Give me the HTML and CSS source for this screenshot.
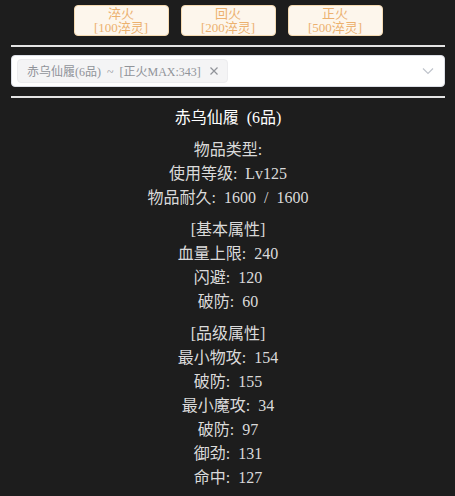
FILE: index.html
```html
<!DOCTYPE html>
<html lang="zh">
<head>
<meta charset="utf-8">
<title>赤乌仙履</title>
<link rel="stylesheet" href="styles.css">
</head>
<body>
<div class="page">
  <div class="btns">
    <button class="btn"><span>淬火</span><span>[100淬灵]</span></button>
    <button class="btn"><span>回火</span><span>[200淬灵]</span></button>
    <button class="btn"><span>正火</span><span>[500淬灵]</span></button>
  </div>
  <hr class="rule">
  <div class="select">
    <span class="tag">赤乌仙履(6品) ~ [正火MAX:343]<svg class="tag-close" viewBox="0 0 14 14" width="14" height="14"><path d="M3.5 3.5 L10.5 10.5 M10.5 3.5 L3.5 10.5" stroke="#909399" stroke-width="1.2" fill="none"/></svg></span>
    <svg class="arrow" viewBox="0 0 12 8" width="12" height="8"><path d="M1 1.5 L6 6.5 L11 1.5" stroke="#c0c4cc" stroke-width="1.2" fill="none"/></svg>
  </div>
  <hr class="rule">
  <div class="info">
    <div class="title">赤乌仙履 (6品)</div>
    <div class="group">
      <div>物品类型:</div>
      <div>使用等级: Lv125</div>
      <div>物品耐久: 1600 / 1600</div>
    </div>
    <div class="group">
      <div>[基本属性]</div>
      <div>血量上限: 240</div>
      <div>闪避: 120</div>
      <div>破防: 60</div>
    </div>
    <div class="group">
      <div>[品级属性]</div>
      <div>最小物攻: 154</div>
      <div>破防: 155</div>
      <div>最小魔攻: 34</div>
      <div>破防: 97</div>
      <div>御劲: 131</div>
      <div>命中: 127</div>
    </div>
  </div>
</div>
</body>
</html>
```

FILE: styles.css
```css
html, body {
  margin: 0;
  padding: 0;
  background: #1d1d1d;
  font-family: "Liberation Serif", "Noto Sans CJK SC", serif;
}

.page {
  padding: 5px 10px 0 11px;
}

.btns {
  display: flex;
  justify-content: center;
  gap: 12px;
}

.btn {
  width: 95px;
  height: 31px;
  box-sizing: border-box;
  border: 1px solid #f5dab1;
  background: #fdf6ec;
  border-radius: 4px;
  color: #ecb16f;
  font-family: "Liberation Serif", "Noto Sans CJK SC", serif;
  font-size: 13px;
  line-height: 14px;
  padding: 0;
  display: flex;
  flex-direction: column;
  align-items: center;
  justify-content: center;
}

.rule {
  margin: 9px 0 8px;
  border: 0;
  height: 2px;
  background: #e4e4e4;
}

.select {
  height: 32px;
  box-sizing: border-box;
  background: #fff;
  border: 1px solid #dcdfe6;
  border-radius: 4px;
  display: flex;
  align-items: center;
  padding: 0 10px 0 5px;
}

.tag {
  display: inline-flex;
  align-items: center;
  height: 24px;
  box-sizing: border-box;
  padding: 0 6px 0 9px;
  background: #f4f4f5;
  border: 1px solid #ececee;
  border-radius: 4px;
  color: #909399;
  font-size: 12px;
  word-spacing: 0.25em;
}

.tag-close {
  margin-left: 6px;
}

.arrow {
  margin-left: auto;
}

.info {
  text-align: center;
  color: #dadada;
  font-size: 16px;
  line-height: 24px;
  word-spacing: 0.25em;
}

.title {
  color: #ffffff;
}

.group {
  margin-top: 8px;
}
```
